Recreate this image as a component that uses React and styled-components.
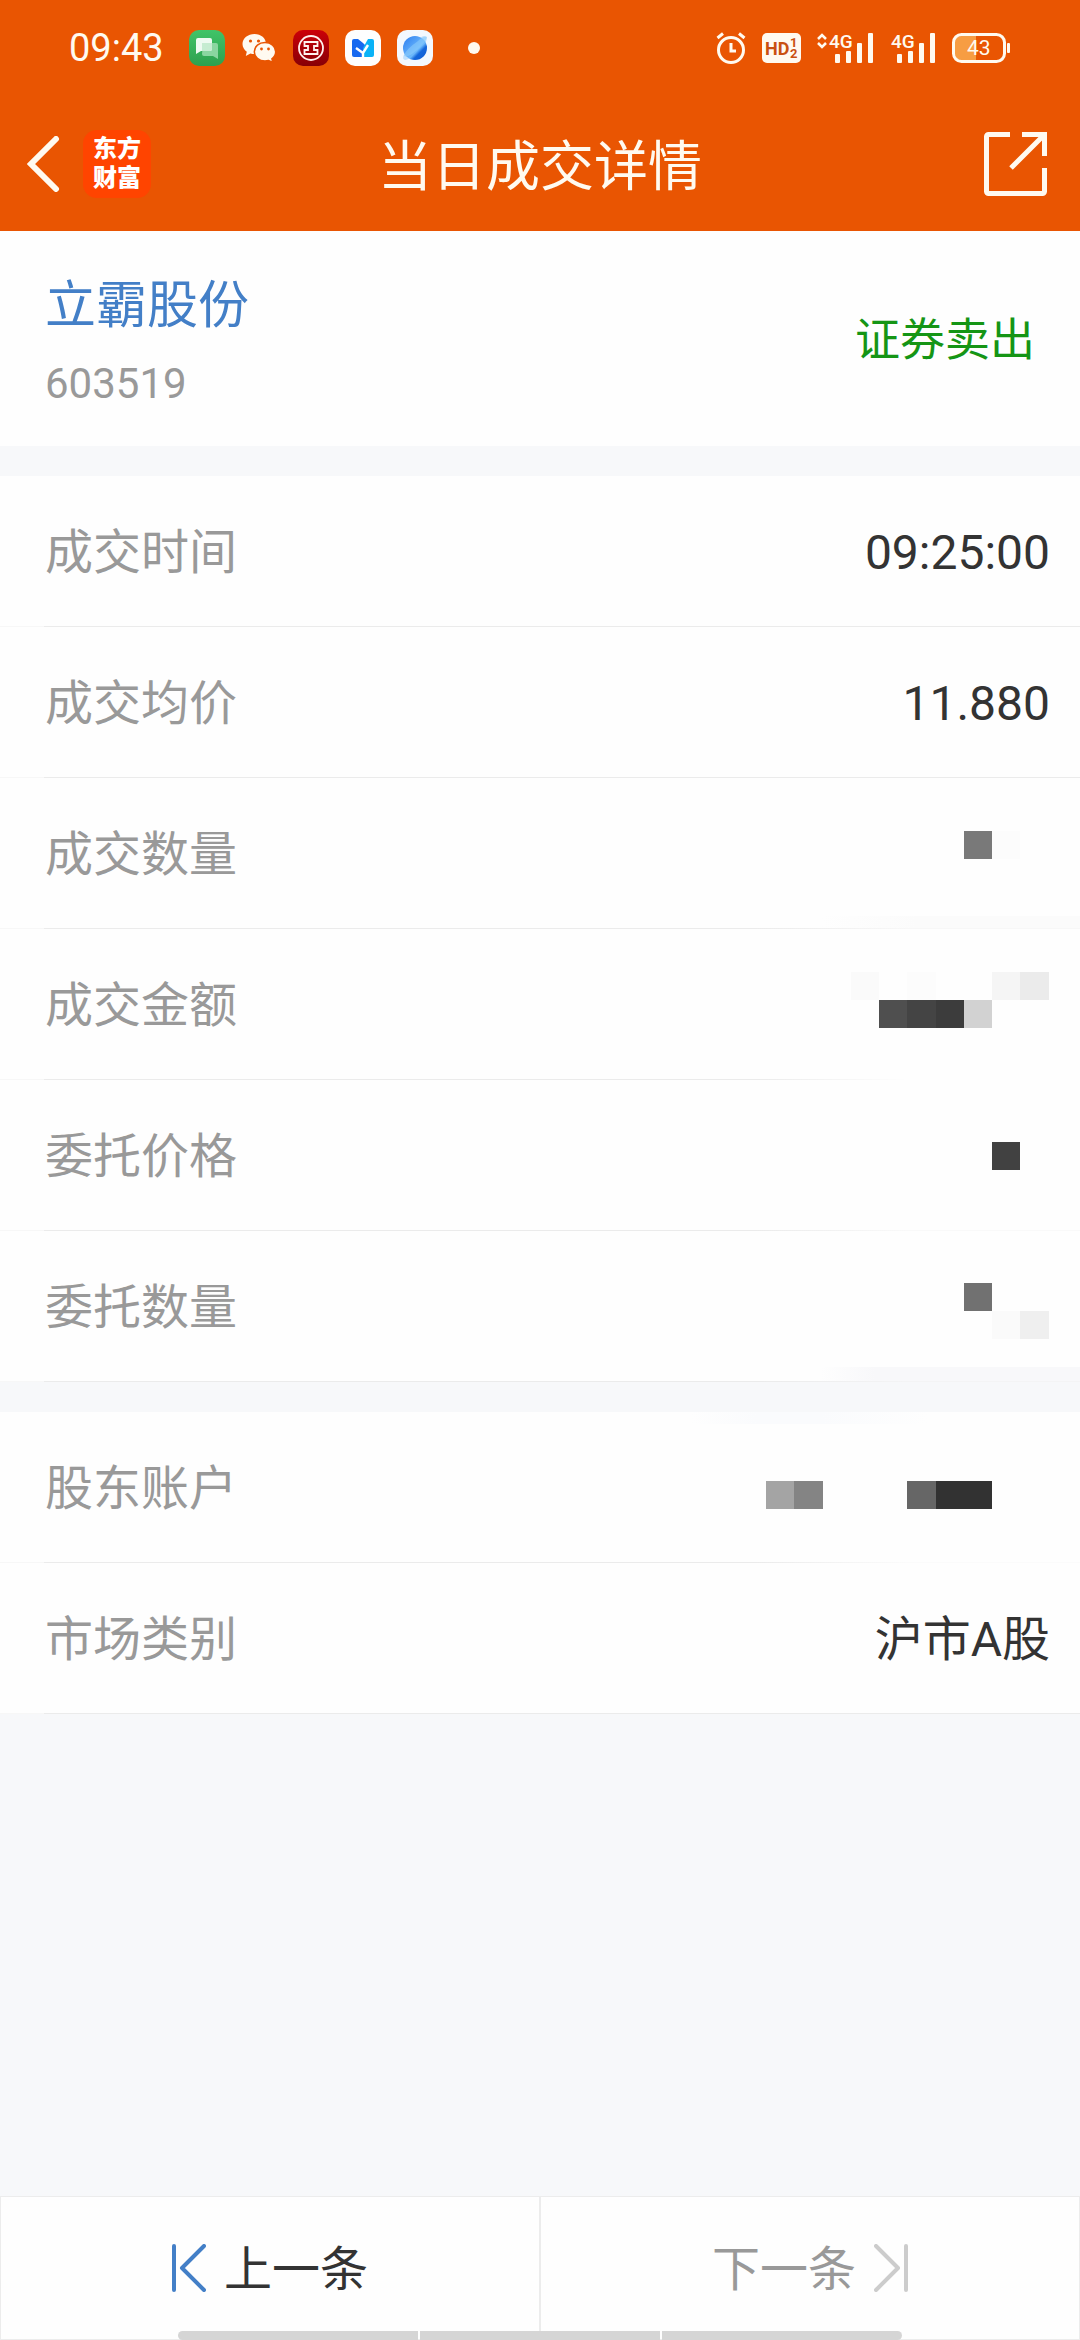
import styled, { createGlobalStyle } from "styled-components";

const GlobalStyle = createGlobalStyle`
  * {
    box-sizing: border-box;
  }
  body {
    margin: 0;
    background-color: #f7f8fa;
    font-family: Roboto, "Noto Sans CJK SC", sans-serif;
    color: #333333;
  }
`;

const Page = styled.div`
  min-height: 100vh;
  display: flex;
  flex-direction: column;
`;

const Header = styled.header`
  background-color: #e95502;
  color: #fffaf0;
`;

const StatusBar = styled.div`
  height: 96px;
  padding: 0 69px;
  display: flex;
  align-items: center;
  justify-content: space-between;
`;

const StatusGroup = styled.div`
  display: flex;
  align-items: center;
  gap: 16px;
`;

const Clock = styled.time`
  width: 104px;
  font-size: 38px;
  line-height: 48px;
`;

const Dot = styled.span`
  width: 12px;
  height: 12px;
  margin-left: 19px;
  border-radius: 50%;
  background-color: #fffaf0;
`;

const NavBar = styled.nav`
  height: 135px;
  padding: 0 27px;
  display: grid;
  grid-template-columns: 1fr auto 1fr;
  align-items: center;
`;

const NavStart = styled.div`
  display: flex;
  align-items: center;
  gap: 21px;
`;

const IconButton = styled.button`
  display: flex;
  padding: 0;
  border: none;
  background: none;
  color: inherit;
  cursor: pointer;
`;

const ShareButton = styled(IconButton)`
  justify-self: end;
`;

const Brand = styled.a`
  width: 68px;
  height: 68px;
  padding-bottom: 6px;
  display: flex;
  flex-direction: column;
  align-items: center;
  justify-content: center;
  border-radius: 14px;
  background-color: #ff4400;
  color: white;
  font-family: "Noto Sans CJK SC", sans-serif;
  font-size: 24px;
  font-weight: 900;
  line-height: 29px;
  text-decoration: none;
`;

const Title = styled.h1`
  margin: 0;
  padding-top: 8px;
  font-size: 54px;
  font-weight: 400;
  line-height: 80px;
`;

const Summary = styled.section`
  padding: 39px 45px 34px;
  display: flex;
  align-items: center;
  justify-content: space-between;
  background-color: #fefefe;
`;

const Stock = styled.div`
  display: flex;
  flex-direction: column;
  gap: 14px;
`;

const StockName = styled.a`
  font-size: 51px;
  line-height: 72px;
  color: #437fc7;
  text-decoration: none;
`;

const StockCode = styled.span`
  font-size: 42px;
  line-height: 56px;
  color: #999999;
`;

const Side = styled.span`
  font-size: 45px;
  line-height: 72px;
  color: #159515;
`;

const List = styled.dl`
  margin: 30px 0 0;
`;

const smears = {
  low: "linear-gradient(to right, transparent 76%, #f8f8fa 81%) bottom / 100% 14px no-repeat",
  faint:
    "linear-gradient(to right, transparent 76%, #fbfbfb 85%) bottom / 100% 12px no-repeat",
  high: "linear-gradient(to right, transparent 64%, #fafbfd 70%, #fafbfd 76%, transparent 86%) top / 100% 12px no-repeat",
};

const Row = styled.div`
  padding: 0 30px 0 45px;
  display: flex;
  align-items: center;
  justify-content: space-between;
  background: ${(props) => (props.$smear ? smears[props.$smear] + "," : "")}
    #fefefe;
  border-bottom: 1px solid;
  border-image: linear-gradient(
      to right,
      #f7f7f7 45px,
      #ebebeb 45px,
      #ebebeb 70%,
      ${(props) => props.$fade || "#ebebeb"} 84%
    )
    1;
`;

const Label = styled.dt`
  padding-top: 4px;
  font-size: 48px;
  line-height: 146px;
  color: #999999;
`;

const Value = styled.dd`
  margin: 0;
  padding-top: ${(props) => (props.$masked ? 0 : 4)}px;
  display: flex;
  font-size: 48px;
  line-height: 146px;
`;

const Footer = styled.footer`
  position: relative;
  margin-top: auto;
  display: flex;
`;

const PagerButton = styled.button`
  flex: 1;
  height: 144px;
  padding: 0;
  display: flex;
  align-items: center;
  justify-content: center;
  gap: 18px;
  border: 1px solid #ececec;
  background-color: #fefefe;
  color: #333333;
  font-family: inherit;
  font-size: 48px;
  line-height: 72px;
  cursor: pointer;

  &:disabled {
    color: #999999;
    cursor: default;
  }
`;

const PagerText = styled.span`
  padding-top: 4px;
`;

const GestureBar = styled.div`
  position: absolute;
  left: 0;
  right: 0;
  bottom: 0;
  width: 67%;
  height: 9px;
  margin: 0 auto;
  display: flex;
  gap: 2px;
  border-radius: 5px;
  overflow: hidden;
`;

const GestureSegment = styled.span`
  flex: 1;
  background-color: #d5d5d5;
`;

// hidden values: [x, y, width, color]
const masks = {
  dealCount: [
    [198, 53, 28, "#797979"],
    [226, 53, 28, "#fcfcfc"],
  ],
  dealAmount: [
    [85, 43, 28, "#fafafa"],
    [141, 43, 29, "#fcfcfc"],
    [226, 43, 28, "#f5f5f5"],
    [254, 43, 29, "#ebebeb"],
    [113, 71, 28, "#4f4f4f"],
    [141, 71, 29, "#444444"],
    [170, 71, 28, "#3c3c3c"],
    [198, 71, 28, "#d2d2d2"],
  ],
  orderPrice: [[226, 62, 28, "#414141"]],
  orderCount: [
    [198, 52, 28, "#717171"],
    [226, 80, 28, "#fafafa"],
    [254, 80, 29, "#efefef"],
  ],
  account: [
    [0, 69, 28, "#a4a4a4"],
    [28, 69, 29, "#848484"],
    [141, 69, 29, "#666666"],
    [170, 69, 56, "#323232"],
  ],
};

const dealRows = [
  { label: "成交时间", value: "09:25:00" },
  { label: "成交均价", value: "11.880" },
  { label: "成交数量", mask: "dealCount", smear: "faint", fade: "#f7f7f7" },
  { label: "成交金额", mask: "dealAmount", fade: "#fefefe" },
  { label: "委托价格", mask: "orderPrice", fade: "#f9f9f9" },
  { label: "委托数量", mask: "orderCount", smear: "low", fade: "#f4f4f5" },
];

const accountRows = [
  { label: "股东账户", mask: "account", smear: "high", fade: "#fbfbfb" },
  { label: "市场类别", value: "沪市A股" },
];

const Mosaic = ({ cells }) => (
  <svg width="284" height="150" role="img" aria-label="已隐藏">
    {cells.map(([x, y, width, color]) => (
      <rect key={x + "-" + y} x={x} y={y} width={width} height="28" fill={color} />
    ))}
  </svg>
);

const MessageIcon = () => (
  <svg width="36" height="36" viewBox="0 0 36 36">
    <defs>
      <linearGradient id="msg" x1="0" y1="0" x2="0" y2="1">
        <stop offset="0" stopColor="#40c468" />
        <stop offset="1" stopColor="#2ea04e" />
      </linearGradient>
    </defs>
    <rect width="36" height="36" rx="10" fill="url(#msg)" />
    <path d="M14 13h13a2 2 0 0 1 2 2v14l-5-3H15a2 2 0 0 1-2-2z" fill="#8ad6a0" />
    <path
      d="M9 8h12a2 2 0 0 1 2 2v9a2 2 0 0 1-2 2h-9l-5 3V10a2 2 0 0 1 2-2z"
      fill="#eefaf1"
    />
    <path d="M13 13h10v6a2 2 0 0 1-2 2h-8z" fill="#c6ecd1" />
  </svg>
);

const WeChatIcon = () => (
  <svg width="36" height="36" viewBox="0 0 36 36">
    <path
      d="M13.5 4C7 4 1.500 8.300 1.500 14c0 3.200 1.700 5.900 4.300 7.700L4.800 26l4.600-2.500c1.300.4 2.700.5 4.100.5C20 24 25 19.700 25 14S20 4 13.500 4z"
      fill="#fffaf0"
    />
    <path
      d="M24 12.500c-6 0-10.700 4-10.700 9.200S18 31 24 31c1.300 0 2.500-.2 3.600-.5l4.300 2-1-3.700c2.300-1.700 3.800-4.200 3.800-7.100 0-5.200-4.700-9.200-10.700-9.200z"
      fill="#fffaf0"
      stroke="#e95502"
      strokeWidth="1.500"
    />
    <g fill="#e95502">
      <circle cx="9.500" cy="11" r="1.600" />
      <circle cx="17.500" cy="11" r="1.600" />
      <circle cx="20.500" cy="19" r="1.400" />
      <circle cx="27.500" cy="19" r="1.400" />
    </g>
  </svg>
);

const BankIcon = () => (
  <svg width="36" height="36" viewBox="0 0 36 36">
    <defs>
      <linearGradient id="bank" x1="0" y1="0" x2="0" y2="1">
        <stop offset="0" stopColor="#cc0008" />
        <stop offset="1" stopColor="#870006" />
      </linearGradient>
    </defs>
    <rect width="36" height="36" rx="10" fill="url(#bank)" />
    <g fill="none" stroke="#fff1ee" strokeWidth="1.800">
      <circle cx="18" cy="18" r="12" />
      <path d="M17 12h-5.500v4H15v4h-3.500v4H17M19 12h5.500v4H21v4h3.500v4H19" />
      <path d="M15 12h6M15 24h6" />
    </g>
  </svg>
);

const MIcon = () => (
  <svg width="36" height="36" viewBox="0 0 36 36">
    <rect width="36" height="36" rx="10" fill="#fefefe" />
    <path d="M9 9h4l5 4 4 4-4 10H9a2 2 0 0 1-2-2V11a2 2 0 0 1 2-2z" fill="#1769f0" />
    <path d="M23 9h4a2 2 0 0 1 2 2v14a2 2 0 0 1-2 2h-9v-9z" fill="#09b2f7" />
    <path
      d="M11 18l7 5 5-8M18 22v6"
      fill="none"
      stroke="#fefefe"
      strokeWidth="2.400"
    />
    <path d="M14 8l4 4 4-4z" fill="#fefefe" />
  </svg>
);

const BrowserIcon = () => (
  <svg width="36" height="36" viewBox="0 0 36 36">
    <defs>
      <linearGradient id="globe" x1="0" y1="0" x2="1" y2="1">
        <stop offset="0" stopColor="#2b7cf0" />
        <stop offset=".6" stopColor="#6db9fb" />
        <stop offset=".7" stopColor="#1467dc" />
        <stop offset="1" stopColor="#0d5ad0" />
      </linearGradient>
    </defs>
    <rect width="36" height="36" rx="10" fill="#f3f8fe" />
    <ellipse
      cx="18"
      cy="18"
      rx="16"
      ry="5"
      transform="rotate(-45 18 18)"
      fill="#bfe0fd"
    />
    <circle cx="18" cy="18" r="12" fill="url(#globe)" />
    <path
      d="M7 26c2 1 5 0 8-2 6-4 13-11 15-17-3-1-6 1-9 4C14 16 8 21 7 26z"
      fill="#8accfc"
      opacity=".6"
    />
  </svg>
);

const AlarmIcon = () => (
  <svg width="30" height="32" viewBox="0 0 30 32" fill="none" stroke="currentColor">
    <circle cx="15" cy="18" r="12.500" strokeWidth="3" />
    <path d="M15 11v8h5" strokeWidth="3" />
    <path d="M1.500 6L7 1.500M28.500 6L23 1.500" strokeWidth="3" />
  </svg>
);

const HdIcon = () => (
  <svg width="39" height="30" viewBox="0 0 39 30">
    <rect width="39" height="30" rx="5" fill="currentColor" />
    <g fill="#c95010" fontFamily="Roboto, sans-serif" fontWeight="700">
      <text x="3" y="22" fontSize="18">
        HD
      </text>
      <text x="28" y="14" fontSize="13">
        1
      </text>
      <text x="28" y="25" fontSize="13">
        2
      </text>
    </g>
  </svg>
);

const SignalIcon = ({ active }) => (
  <svg
    width={active ? 57 : 46}
    height="42"
    viewBox={active ? "0 -6 57 42" : "11 -6 46 42"}
    fill="currentColor"
  >
    {active && (
      <path
        d="M1 6l4-4 4 4M1 10l4 4 4-4"
        fill="none"
        stroke="currentColor"
        strokeWidth="2.500"
      />
    )}
    <text x="12" y="15" fontSize="19" fontFamily="Roboto, sans-serif" fontWeight="500">
      4G
    </text>
    <rect x="18" y="21" width="5" height="9" rx="1" />
    <rect x="29" y="18" width="5" height="12" rx="1" />
    <rect x="40" y="10" width="5" height="20" rx="1" />
    <rect x="51" y="0" width="5" height="30" rx="1" />
  </svg>
);

const BatteryIcon = () => (
  <svg width="59" height="30" viewBox="0 0 59 30">
    <path d="M9 3h15v24H9a6 6 0 0 1-6-6V9a6 6 0 0 1 6-6z" fill="#f79d43" />
    <rect
      x="1.500"
      y="1.500"
      width="51"
      height="27"
      rx="8"
      fill="none"
      stroke="currentColor"
      strokeWidth="3"
    />
    <rect x="55" y="10" width="3" height="10" rx="1" fill="currentColor" />
    <text x="15" y="22" fontSize="21" fontFamily="Roboto, sans-serif" fill="currentColor">
      43
    </text>
  </svg>
);

const BackIcon = () => (
  <svg width="35" height="56" viewBox="4 0 35 56" fill="none">
    <path d="M33 3L8 28l25 25" stroke="currentColor" strokeWidth="6" strokeLinecap="round" />
  </svg>
);

const ShareIcon = () => (
  <svg width="69" height="64" viewBox="0 0 69 64" fill="none">
    <path
      d="M26 2.500H4.500a2 2 0 0 0-2 2V59.500a2 2 0 0 0 2 2H58.500a2 2 0 0 0 2-2V36M38 2.500h22.500V24M60 3L27 36"
      stroke="currentColor"
      strokeWidth="5"
    />
  </svg>
);

const StepIcon = ({ color, next }) => (
  <svg width="34" height="48" viewBox="0 0 34 48" fill="none">
    <path
      d={next ? "M32 2v44M2 2l22 22L2 46" : "M2 2v44M32 2L10 24l22 22"}
      stroke={color}
      strokeWidth="4"
      strokeLinecap="round"
      strokeLinejoin="round"
    />
  </svg>
);

const DetailList = ({ rows }) => (
  <List>
    {rows.map((row) => (
      <Row key={row.label} $smear={row.smear} $fade={row.fade}>
        <Label>{row.label}</Label>
        <Value $masked={!!row.mask}>
          {row.mask ? <Mosaic cells={masks[row.mask]} /> : row.value}
        </Value>
      </Row>
    ))}
  </List>
);

const App = () => {
  return (
    <Page>
      <GlobalStyle />
      <Header>
        <StatusBar>
          <StatusGroup>
            <Clock>09:43</Clock>
            <MessageIcon />
            <WeChatIcon />
            <BankIcon />
            <MIcon />
            <BrowserIcon />
            <Dot />
          </StatusGroup>
          <StatusGroup>
            <AlarmIcon />
            <HdIcon />
            <SignalIcon active />
            <SignalIcon />
            <BatteryIcon />
          </StatusGroup>
        </StatusBar>
        <NavBar>
          <NavStart>
            <IconButton aria-label="返回">
              <BackIcon />
            </IconButton>
            <Brand href="#">
              <span>东方</span>
              <span>财富</span>
            </Brand>
          </NavStart>
          <Title>当日成交详情</Title>
          <ShareButton aria-label="分享">
            <ShareIcon />
          </ShareButton>
        </NavBar>
      </Header>
      <Summary>
        <Stock>
          <StockName href="#">立霸股份</StockName>
          <StockCode>603519</StockCode>
        </Stock>
        <Side>证券卖出</Side>
      </Summary>
      <DetailList rows={dealRows} />
      <DetailList rows={accountRows} />
      <Footer>
        <PagerButton>
          <StepIcon color="#437fc7" />
          <PagerText>上一条</PagerText>
        </PagerButton>
        <PagerButton disabled>
          <PagerText>下一条</PagerText>
          <StepIcon color="#cccccc" next />
        </PagerButton>
        <GestureBar>
          <GestureSegment />
          <GestureSegment />
          <GestureSegment />
        </GestureBar>
      </Footer>
    </Page>
  );
};

export default App;
